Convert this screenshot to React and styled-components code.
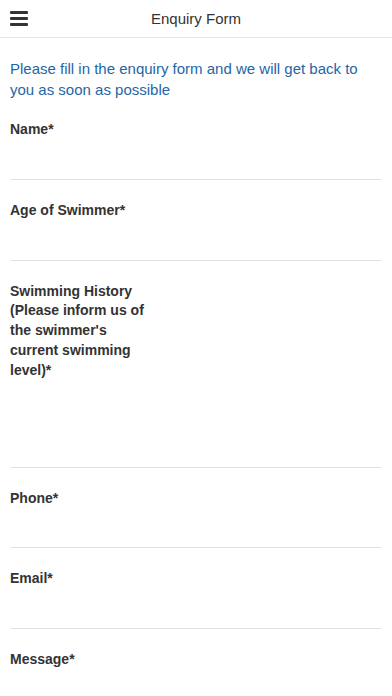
import React from 'react'
import styled, { createGlobalStyle } from 'styled-components'

const GlobalStyle = createGlobalStyle`
  html, body {
    margin: 0;
    padding: 0;
    background: #fff;
    font-family: "Liberation Sans", Arial, sans-serif;
    color: #333;
  }
  * { box-sizing: border-box; }
`

const fields = [
  { label: 'Name*' },
  { label: 'Age of Swimmer*' },
  { label: "Swimming History (Please inform us of the swimmer's current swimming level)*", multi: true },
  { label: 'Phone*' },
  { label: 'Email*' },
  { label: 'Message*', multi: true },
]

const App = () => {
  return (
    <Page>
      <GlobalStyle />
      <TopBar>
        <MenuButton aria-label='menu'>
          <span />
          <span />
          <span />
        </MenuButton>
        <Title>Enquiry Form</Title>
      </TopBar>
      <Intro>
        Please fill in the enquiry form and we will get back to you as soon as possible
      </Intro>
      <Form>
        {fields.map((f) => (
          <Field key={f.label}>
            <Label>{f.label}</Label>
            {f.multi ? <TextArea /> : <Input type='text' />}
          </Field>
        ))}
      </Form>
    </Page>
  )
}

const Page = styled.div`
  width: 392px;
  min-height: 696px;
  background: #fff;
`

const TopBar = styled.header`
  height: 38px;
  display: flex;
  align-items: center;
  justify-content: center;
  position: relative;
  border-bottom: 1px solid #e6e6e6;
`

const MenuButton = styled.button`
  position: absolute;
  left: 10px;
  top: 11px;
  width: 18px;
  height: 15px;
  padding: 0;
  border: none;
  background: none;
  display: flex;
  flex-direction: column;
  justify-content: space-between;
  span {
    display: block;
    height: 3px;
    background: #333;
    border-radius: 1px;
  }
`

const Title = styled.h1`
  margin: 0;
  font-size: 15px;
  font-weight: normal;
  color: #333;
`

const Intro = styled.p`
  margin: 0;
  padding: 20px 10px 0;
  font-size: 15px;
  line-height: 21px;
  color: #1f66a6;
`

const Form = styled.form`
  padding: 0 10px;
`

const Field = styled.div`
  padding-top: 20px;
  border-bottom: 1px solid #e3e3e3;
  display: flex;
  flex-direction: column;
  &:not(:first-child) {
    padding-top: 21px;
  }
`

const Label = styled.label`
  max-width: 140px;
  font-size: 14px;
  line-height: 19.8px;
  font-weight: bold;
  color: #333;
`

const Input = styled.input`
  height: 39px;
  border: none;
  outline: none;
  background: transparent;
  font-family: inherit;
  font-size: 14px;
`

const TextArea = styled.textarea`
  height: 86px;
  border: none;
  outline: none;
  resize: none;
  background: transparent;
  font-family: inherit;
  font-size: 14px;
`

export default App
